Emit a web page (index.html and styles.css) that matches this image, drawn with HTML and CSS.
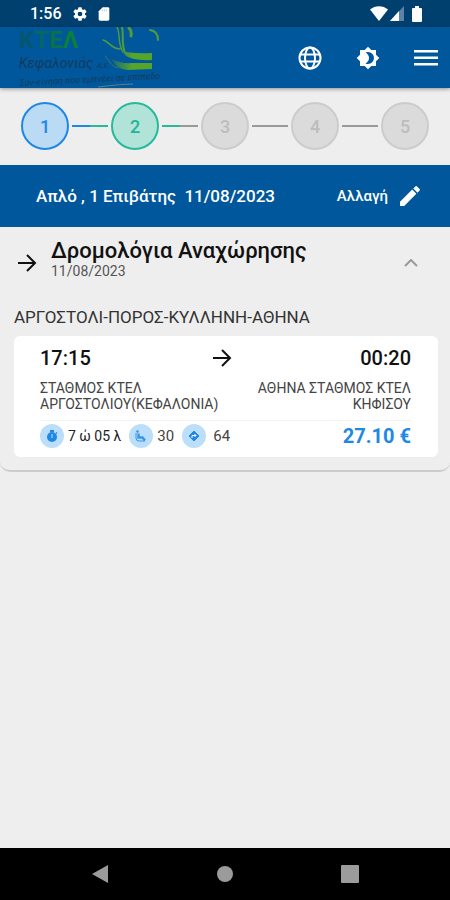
FILE: index.html
```html
<!DOCTYPE html>
<html lang="el">
<head>
<meta charset="utf-8">
<meta name="viewport" content="width=device-width, initial-scale=1">
<title>ΚΤΕΛ Κεφαλονιάς</title>
<link rel="stylesheet" href="styles.css">
</head>
<body>
<div class="status">
  <div class="status-group">
    <span class="clock">1:56</span>
    <svg class="status-icon" viewBox="0 0 24 24"><path fill="currentColor" d="M19.4 13a7.500 7.500 0 0 0 0-2l2.200-1.700c.2-.1.200-.4.100-.6l-2-3.500c-.1-.2-.4-.3-.6-.2l-2.500 1a7.700 7.700 0 0 0-1.700-1l-.4-2.600A.5.5 0 0 0 14 2h-4a.5.5 0 0 0-.5.400L9.100 5a7.700 7.700 0 0 0-1.700 1l-2.500-1a.5.5 0 0 0-.6.200l-2 3.500c-.1.200-.1.500.1.600L4.600 11a7.500 7.500 0 0 0 0 2l-2.200 1.700c-.2.100-.2.400-.1.600l2 3.500c.1.200.4.300.6.200l2.500-1a7.700 7.700 0 0 0 1.700 1l.4 2.600c0 .2.200.4.500.4h4c.2 0 .5-.2.500-.4l.4-2.600a7.700 7.700 0 0 0 1.700-1l2.500 1c.2.100.5 0 .6-.2l2-3.500c.1-.2.100-.5-.1-.6zM12 15.500a3.500 3.500 0 1 1 0-7 3.500 3.500 0 0 1 0 7z"/></svg>
    <svg class="status-icon" viewBox="0 0 24 24"><path fill="currentColor" d="M18 2h-8L4 8v12c0 1.100.9 2 2 2h12c1.100 0 2-.9 2-2V4c0-1.100-.9-2-2-2z"/><path stroke="#b9cadb" stroke-width="1.500" d="M10 5v3M13 5v3M16 5v3"/></svg>
  </div>
  <div class="status-group signals">
    <svg class="wifi" viewBox="0 0 18 15"><path fill="currentColor" d="M9 15 0 3.500C5-1 13-1 18 3.500z"/></svg>
    <svg class="cell" viewBox="0 0 14 15"><path fill="#5d84a8" d="M14 0v15H0z"/><path fill="currentColor" d="M9 5v10H0z"/></svg>
    <svg class="battery" viewBox="0 0 10 16"><path fill="currentColor" d="M3 0h4v2h2q1 0 1 1v12q0 1-1 1H1q-1 0-1-1V3q0-1 1-1h2z"/></svg>
  </div>
</div>

<header class="appbar">
  <a class="logo" href="#" aria-label="ΚΤΕΛ Κεφαλονιάς">
    <svg viewBox="0 0 150 61">
      <defs><linearGradient id="fade" x1="0" x2="1"><stop offset="0" stop-color="#176a78"/><stop offset=".5" stop-color="#57a42a"/></linearGradient></defs>
      <text class="logo-name" x="1" y="21"><tspan fill="#07566f">Κ</tspan><tspan fill="#076763">Τ</tspan><tspan fill="#08734b">Ε</tspan><tspan fill="#088039">Λ</tspan></text>
      <text class="logo-place" x="1" y="41">Κεφαλονιάς <tspan class="logo-small">Α.Ε.</tspan></text>
      <text class="logo-tag" x="2" y="59" transform="rotate(-3 2 59)">Συν-κίνηση που εμπνέει σε επίπεδο</text>
      <g fill="none" stroke="#4f9b3d" stroke-linecap="round">
        <path stroke-width="1.500" d="M85 13c6 1 8 9 17 9M99 0c4 8 0 15 6 25"/>
        <path stroke-width="2" d="M104 0c2 8-1 16 3 26"/>
        <path stroke-width="3" d="M111 1q3 3 2 8"/>
        <path stroke-width="2" d="M132 3q8 1 8 10"/>
        <path stroke-width="1" stroke="#397b68" d="M87 29c4 3 5 10 13 12"/>
      </g>
      <path fill="url(#fade)" d="M104 23q6 4 30 3v7q-21 1-27-5zM94 32q9 5 20 4h20v6l-24 1q-12 0-16-11z"/>
      <path fill="none" stroke="#637d83" d="M80 60q25-3 35-3"/>
    </svg>
  </a>
  <div class="actions">
    <button class="icon-button" aria-label="Γλώσσα"><svg viewBox="0 0 24 24" fill="none" stroke="currentColor" stroke-width="2"><circle cx="12" cy="12" r="10.500"/><ellipse cx="12" cy="12" rx="5" ry="10.500"/><path d="M2 8.500h20M2 15.500h20"/></svg></button>
    <button class="icon-button" aria-label="Θέμα"><svg viewBox="0 0 24 24"><path fill="currentColor" fill-rule="evenodd" d="M20 8.700V4h-4.700L12 .7 8.700 4H4v4.700L.7 12 4 15.300V20h4.700l3.300 3.300 3.300-3.300H20v-4.700l3.300-3.300zM12 18q-1.500 0-2.500-.5c2-.9 3.500-3 3.500-5.500s-1.500-4.600-3.500-5.500Q10.500 6 12 6a6 6 0 0 1 0 12z"/></svg></button>
    <button class="icon-button" aria-label="Μενού"><svg viewBox="0 0 24 24"><path fill="currentColor" d="M0 4h24v2.500H0zm0 6.500h24V13H0zM0 17h24v2.500H0z"/></svg></button>
  </div>
</header>

<main class="content">
  <ol class="steps">
    <li class="step done">1</li>
    <li class="line first" aria-hidden="true"></li>
    <li class="step current">2</li>
    <li class="line second" aria-hidden="true"></li>
    <li class="step">3</li>
    <li class="line" aria-hidden="true"></li>
    <li class="step">4</li>
    <li class="line" aria-hidden="true"></li>
    <li class="step">5</li>
  </ol>

  <div class="summary">
    <span class="trip">Απλό , 1 Επιβάτης &nbsp;11/08/2023</span>
    <button class="change">Αλλαγή <svg viewBox="0 0 24 24"><path fill="currentColor" d="M2 17.800V22h4.200L18.400 9.800l-4.200-4.200zM21.600 6.600c.5-.5.500-1.100 0-1.600L19 2.400c-.5-.5-1.100-.5-1.600 0l-2.100 2.100 4.200 4.200z"/></svg></button>
  </div>

  <section class="departures">
    <button class="panel-head" aria-expanded="true">
      <svg class="arrow" viewBox="0 0 20 20"><path d="M1 10h17M10 2l8 8-8 8"/></svg>
      <span class="heading"><span class="title">Δρομολόγια Αναχώρησης</span><span class="date">11/08/2023</span></span>
      <svg class="chevron" viewBox="0 0 14 8"><path d="m1 7 6-6 6 6"/></svg>
    </button>
    <h2 class="route">ΑΡΓΟΣΤΟΛΙ-ΠΟΡΟΣ-ΚΥΛΛΗΝΗ-ΑΘΗΝΑ</h2>
    <article class="card">
      <div class="times">
        <span>17:15</span>
        <svg class="arrow" viewBox="0 0 20 20"><path d="M1 10h17M10 2l8 8-8 8"/></svg>
        <span class="arrive">00:20</span>
      </div>
      <div class="stations">
        <span>ΣΤΑΘΜΟΣ ΚΤΕΛ ΑΡΓΟΣΤΟΛΙΟΥ(ΚΕΦΑΛΟΝΙΑ)</span>
        <span class="arrive">ΑΘΗΝΑ ΣΤΑΘΜΟΣ ΚΤΕΛ ΚΗΦΙΣΟΥ</span>
      </div>
      <div class="details">
        <span class="fact duration"><svg viewBox="0 0 24 24"><circle cx="12" cy="12" r="12" fill="#bbdefb"/><path fill="#1e88e5" d="M10 6h4v2h-4zM16.500 8l1 1-1 1-1-1z"/><circle cx="12" cy="13" r="5" fill="#1e88e5"/><path stroke="#bbdefb" d="M12 10v4"/></svg>7 ώ 05 λ</span>
        <span class="fact"><svg viewBox="0 0 24 24"><circle cx="12" cy="12" r="12" fill="#bbdefb"/><g fill="none" stroke="#3b96e8"><path d="M7 9v5q0 3 3 3h6"/><path stroke-width="2.500" d="M9.500 9.500v4h4l2.500 3"/></g><circle cx="8.500" cy="7.500" r="1.300" fill="#3b96e8"/></svg>30</span>
        <span class="fact distance"><svg viewBox="0 0 24 24"><circle cx="12" cy="12" r="12" fill="#bbdefb"/><path fill="#1e88e5" stroke="#1e88e5" stroke-linejoin="round" d="m12 7 5 5-5 5-5-5z"/><path fill="none" stroke="#fff" d="M10 14v-2.500h4M12.500 10l1.500 1.500-1.500 1.500"/></svg>64</span>
        <strong class="price">27.10 €</strong>
      </div>
    </article>
  </section>
</main>

<nav class="system-nav">
  <button aria-label="Πίσω"><svg viewBox="0 0 18 18"><path d="M1 9 17 0v18z"/></svg></button>
  <button aria-label="Αρχική"><svg viewBox="0 0 18 18"><circle cx="9" cy="9" r="8"/></svg></button>
  <button aria-label="Πρόσφατα"><svg viewBox="0 0 18 18"><rect width="18" height="18" rx="1"/></svg></button>
</nav>
</body>
</html>
```
FILE: styles.css
```css
* { box-sizing: border-box; }
body {
  margin: 0;
  min-height: 100vh;
  display: flex;
  flex-direction: column;
  background: #eee;
  color: #111;
  font-family: Roboto, "Noto Sans", sans-serif;
}
button {
  border: 0;
  padding: 0;
  background: none;
  color: inherit;
  font: inherit;
  cursor: pointer;
}
svg { display: block; flex: none; }

.status {
  display: flex;
  justify-content: space-between;
  align-items: center;
  padding: 0 28px 0 30px;
  height: 27px;
  background: #00406f;
  color: #fff;
}
.status-group { display: flex; align-items: center; gap: 8px; }
.clock { font-size: 16px; font-weight: 500; margin-right: 2px; }
.status-icon { width: 16px; height: 16px; }
.signals { gap: 2px; }
.wifi { width: 18px; height: 15px; }
.cell { width: 14px; height: 15px; margin-right: 6px; }
.battery { width: 10px; height: 16px; }

.appbar {
  display: flex;
  justify-content: space-between;
  align-items: center;
  height: 61px;
  padding: 0 12px 0 18px;
  background: #00579c;
  color: #fff;
  box-shadow: 0 1px 4px rgba(0, 0, 0, .4);
}
.logo svg { width: 150px; height: 61px; }
.logo-name { font-size: 24px; font-weight: 700; }
.logo-place { font-size: 14px; font-style: italic; fill: #123b5d; }
.logo-small { font-size: 8px; }
.logo-tag { font-size: 9px; font-style: italic; fill: #123b5d; }
.actions { display: flex; gap: 34px; align-items: center; }
.icon-button svg { width: 24px; height: 24px; }

.content { flex: 1; }
.steps {
  display: flex;
  align-items: center;
  gap: 3px;
  margin: 0;
  padding: 14px 21px 15px;
  list-style: none;
}
.step {
  flex: none;
  display: grid;
  place-items: center;
  width: 48px;
  height: 48px;
  border: 2px solid #ccc;
  border-radius: 50%;
  background: #dbdbdb;
  color: #bdbdbd;
  font-size: 18px;
  font-weight: 500;
}
.done { border-color: #1e88e5; background: #bbdaf3; color: #1e88e5; }
.current { border-color: #26b99a; background: #b2e3d9; color: #1fb594; }
.line { flex: 1; height: 2px; background: #999; }
.first { background: linear-gradient(90deg, #1e88e5 50%, #26b99a 50%); }
.second { background: linear-gradient(90deg, #26b99a 50%, #999 50%); }

.summary {
  display: flex;
  justify-content: space-between;
  align-items: center;
  height: 62px;
  padding: 0 28px 0 36px;
  background: #00579c;
  color: #fff;
  font-size: 17px;
  font-weight: 500;
}
.change { display: flex; align-items: center; gap: 10px; font-size: 15px; }
.change svg { width: 24px; height: 24px; }

.departures {
  padding: 12px 12px 13px 14px;
  border-bottom: 2px solid #ccc;
  border-radius: 0 0 10px 10px;
}
.panel-head {
  display: flex;
  align-items: flex-end;
  width: 100%;
  padding: 0 20px 0 3px;
  gap: 14px;
  text-align: left;
}
.arrow { width: 20px; height: 20px; }
.panel-head .arrow { margin-bottom: 6px; }
.arrow path, .chevron path { fill: none; stroke: #111; stroke-width: 2; }
.heading { flex: 1; }
.title { display: block; font-size: 22px; line-height: 24px; font-weight: 500; }
.date { display: block; font-size: 14px; line-height: 16px; color: #555; }
.chevron { width: 14px; height: 8px; margin-bottom: 12px; }
.chevron path { stroke: #999; }
.route {
  margin: 28px 0 9px;
  color: #333;
  font-size: 17px;
  line-height: 20px;
  font-weight: 400;
}

.card {
  padding: 10px 27px 9px 26px;
  border-radius: 6px;
  background: #fff;
}
.times {
  display: grid;
  grid-template-columns: 1fr auto 1fr;
  align-items: center;
  font-size: 20px;
  line-height: 24px;
  font-weight: 500;
}
.times .arrow { margin-right: 8px; }
.arrive { text-align: right; }
.stations {
  display: flex;
  justify-content: space-between;
  padding: 10px 0 8px;
  border-bottom: 1px solid #f3f3f3;
  color: #444;
  font-size: 14px;
  line-height: 16px;
}
.stations span { flex: 0 1 184px; }
.details {
  display: flex;
  align-items: center;
  gap: 8px;
  padding-top: 3px;
}
.fact {
  display: flex;
  align-items: center;
  gap: 4px;
  color: #444;
  font-size: 15px;
}
.fact svg { width: 24px; height: 24px; }
.duration { color: #222; font-size: 14px; }
.distance { gap: 7px; }
.price { margin-left: auto; color: #1e88e5; font-size: 20px; font-weight: 700; }

.system-nav {
  display: flex;
  justify-content: center;
  align-items: center;
  gap: 107px;
  height: 52px;
  background: #000;
}
.system-nav svg { width: 18px; height: 18px; fill: #9b9b9b; }
```
